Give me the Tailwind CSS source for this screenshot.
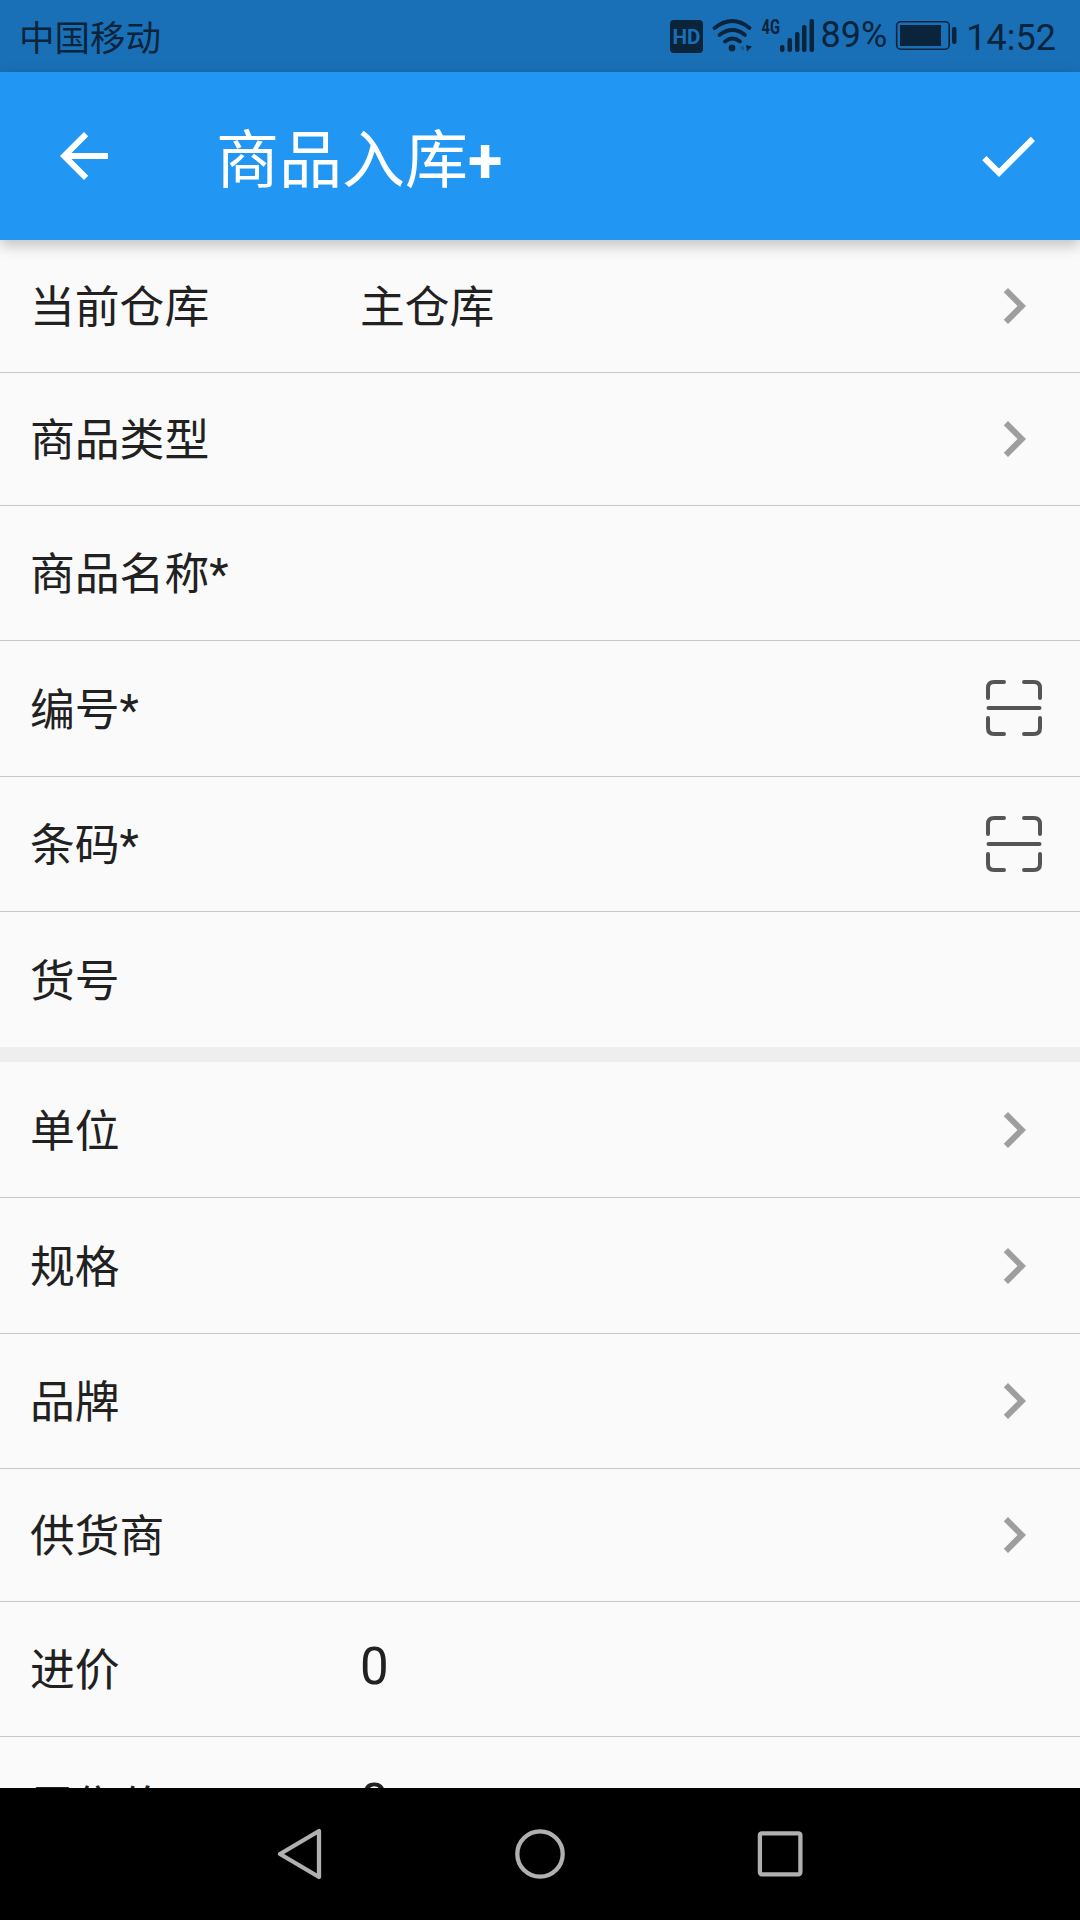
<!DOCTYPE html>
<html lang="zh-CN">
<head>
  <meta charset="UTF-8" />
  <title>商品入库</title>
  <script src="https://cdn.jsdelivr.net/npm/@tailwindcss/browser@4"></script>
</head>
<body class="w-[1080px] h-[1920px] overflow-hidden flex flex-col bg-[#fafafa] text-[#212121] font-['Roboto','Noto_Sans_CJK_SC',sans-serif]">

  <!-- icons -->
  <svg class="hidden">
    <symbol id="chevron" viewBox="0 0 24 24"><path d="M10 6L8.590 7.410 13.170 12l-4.580 4.590L10 18l6-6z" /></symbol>
    <symbol id="scan" viewBox="0 0 56 56">
      <g fill="none" stroke="currentColor" stroke-width="4" stroke-linecap="round">
        <path d="M2 18V8q0-6 6-6h10M38 2h10q6 0 6 6v10M2 38v10q0 6 6 6h10M38 54h10q6 0 6-6V38M2.500 28h51" />
      </g>
    </symbol>
  </svg>

  <!-- status bar -->
  <div class="h-[72px] shrink-0 flex items-center bg-[#1a70b7] text-[#09243b] text-[36px] leading-[72px] pl-[19px] pr-6">
    <span class="font-['Noto_Sans_CJK_SC',sans-serif] text-[35.5px]">中国移动</span>
    <svg class="ml-auto w-[151px] h-[72px] mr-[1px]" viewBox="669 0 151 72" fill="currentColor">
      <rect x="670" y="20" width="33" height="33" rx="4" />
      <text x="686.500" y="44" text-anchor="middle" font-size="21" font-weight="700" fill="#1a70b7" textLength="28" lengthAdjust="spacingAndGlyphs">HD</text>
      <g fill="none" stroke="currentColor" stroke-width="3.800" stroke-linecap="round">
        <path d="M714.500 28q18-14 35 0M719.500 35q13-10 25.500 0M725 41.500q7.500-6 15 0" />
      </g>
      <circle cx="732" cy="48" r="3.400" />
      <path d="M746 45l6 1.500-5 5z" />
      <path d="M740 48l4-3v6z" opacity=".3" />
      <text x="761.500" y="34" font-size="21" font-weight="700" textLength="18.500" lengthAdjust="spacingAndGlyphs">4G</text>
      <rect x="780" y="45" width="4.500" height="7" rx="2" />
      <rect x="787.500" y="38" width="4.500" height="14" rx="2" />
      <rect x="795" y="32" width="4.500" height="20" rx="2" />
      <rect x="802" y="25" width="4.500" height="27" rx="2" />
      <rect x="809.500" y="19" width="4.500" height="33" rx="2" />
    </svg>
    <span class="-mt-0.5">89%</span>
    <svg class="w-[62px] h-[72px] ml-2 mr-[9px]" viewBox="895 0 62 72" fill="currentColor">
      <rect x="896.700" y="21.700" width="52.500" height="27.500" rx="4" fill="none" stroke="currentColor" stroke-width="1.600" />
      <rect x="900" y="25" width="41" height="21" />
      <rect x="952" y="27" width="4.500" height="17" rx="2" />
    </svg>
    <span class="mt-1">14:52</span>
  </div>

  <!-- app bar -->
  <div class="relative z-10 h-[168px] shrink-0 flex items-center pl-12 pr-9 bg-[#2196f3] text-white shadow-[0_5px_14px_rgba(0,0,0,0.24)]">
    <svg class="w-[72px] h-[72px]" viewBox="0 0 24 24" fill="currentColor"><path d="M20 11H7.830l5.590-5.590L12 4l-8 8 8 8 1.410-1.410L7.830 13H20v-2z" /></svg>
    <h1 class="ml-24 pt-[3px] text-[63px] leading-[72px] font-['Noto_Sans_CJK_SC',sans-serif]">商品入库<span class="font-['Roboto'] font-bold">+</span></h1>
    <svg class="ml-auto w-[72px] h-[72px]" viewBox="0 0 24 24" fill="currentColor"><path d="M9 16.170L4.830 12l-1.420 1.410L9 19 21 7l-1.410-1.410z" /></svg>
  </div>

  <!-- form -->
  <div class="grow overflow-hidden text-[44.8px] leading-[60px]">
    <div class="h-[133px] flex items-center border-b border-[#c8c8c8] pl-[30px] pr-[30px]">
      <span class="w-[330px] pt-1">当前仓库</span>
      <span class="pt-1">主仓库</span>
      <svg class="ml-auto w-[72px] h-[72px] fill-[#9e9e9e]"><use href="#chevron" /></svg>
    </div>
    <div class="h-[133px] flex items-center border-b border-[#c8c8c8] pl-[30px] pr-[30px]">
      <span class="w-[330px] pt-1">商品类型</span>
      <svg class="ml-auto w-[72px] h-[72px] fill-[#9e9e9e]"><use href="#chevron" /></svg>
    </div>
    <div class="h-[135px] flex items-center border-b border-[#c8c8c8] pl-[30px]">
      <span class="w-[330px] pt-1">商品名称*</span>
    </div>
    <div class="h-[136px] flex items-center border-b border-[#c8c8c8] pl-[30px] pr-[38px]">
      <span class="w-[330px] pt-1">编号*</span>
      <svg class="ml-auto mb-px w-[56px] h-[56px] text-[#555555]"><use href="#scan" /></svg>
    </div>
    <div class="h-[135px] flex items-center border-b border-[#c8c8c8] pl-[30px] pr-[38px]">
      <span class="w-[330px] pt-1">条码*</span>
      <svg class="ml-auto mb-px w-[56px] h-[56px] text-[#555555]"><use href="#scan" /></svg>
    </div>
    <div class="h-[150px] flex items-center border-b-[15px] border-[#eeeeee] pl-[30px]">
      <span class="w-[330px] pt-1">货号</span>
    </div>
    <div class="h-[136px] flex items-center border-b border-[#c8c8c8] pl-[30px] pr-[30px]">
      <span class="w-[330px] pt-1">单位</span>
      <svg class="ml-auto w-[72px] h-[72px] fill-[#9e9e9e]"><use href="#chevron" /></svg>
    </div>
    <div class="h-[136px] flex items-center border-b border-[#c8c8c8] pl-[30px] pr-[30px]">
      <span class="w-[330px] pt-1">规格</span>
      <svg class="ml-auto w-[72px] h-[72px] fill-[#9e9e9e]"><use href="#chevron" /></svg>
    </div>
    <div class="h-[135px] flex items-center border-b border-[#c8c8c8] pl-[30px] pr-[30px]">
      <span class="w-[330px] pt-1">品牌</span>
      <svg class="ml-auto w-[72px] h-[72px] fill-[#9e9e9e]"><use href="#chevron" /></svg>
    </div>
    <div class="h-[133px] flex items-center border-b border-[#c8c8c8] pl-[30px] pr-[30px]">
      <span class="w-[330px] pt-1">供货商</span>
      <svg class="ml-auto w-[72px] h-[72px] fill-[#9e9e9e]"><use href="#chevron" /></svg>
    </div>
    <div class="h-[135px] flex items-center border-b border-[#c8c8c8] pl-[30px]">
      <span class="w-[330px] pt-1">进价</span>
      <span class="text-[51px] -mt-1">0</span>
    </div>
    <div class="h-[137px] flex items-center border-b border-[#c8c8c8] pl-[30px] pr-[30px]">
      <span class="w-[330px] pt-1.5">零售价</span>
      <span class="text-[51px] -mt-1">0</span>
      <svg class="ml-auto mt-px w-[72px] h-[72px] fill-[#9e9e9e]"><use href="#chevron" /></svg>
    </div>
  </div>

  <!-- navigation bar -->
  <div class="relative z-10 h-[132px] shrink-0 flex items-center justify-center gap-[180px] bg-black text-[#b0b0b0]">
    <svg class="w-[60px] h-[60px]" viewBox="0 0 60 60" fill="none" stroke="currentColor" stroke-width="4.300" stroke-linejoin="round"><path d="M10 30L49 7v46z" /></svg>
    <svg class="w-[60px] h-[60px]" viewBox="0 0 60 60" fill="none" stroke="currentColor" stroke-width="4.300"><circle cx="30" cy="30" r="22.700" /></svg>
    <svg class="w-[60px] h-[60px]" viewBox="0 0 60 60" fill="none" stroke="currentColor" stroke-width="4.300"><rect x="9.900" y="9.300" width="40.500" height="41" rx="2" /></svg>
  </div>

</body>
</html>
